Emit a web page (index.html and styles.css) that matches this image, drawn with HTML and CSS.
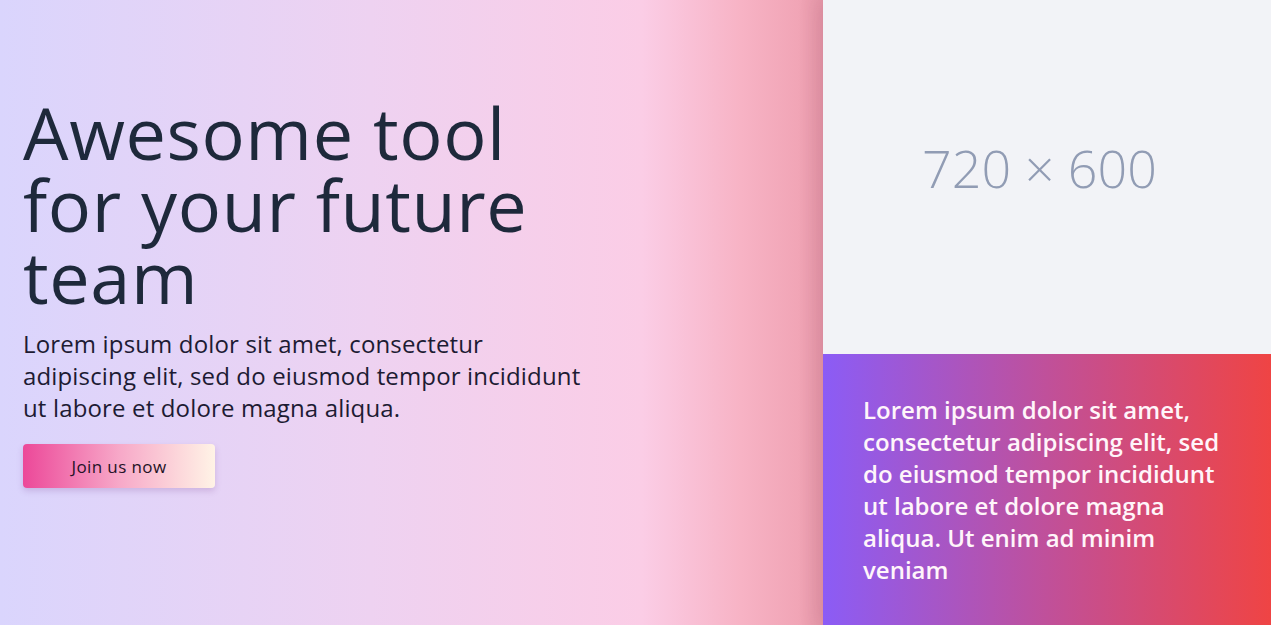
FILE: index.html
```html
<!DOCTYPE html>
<html lang="en">
<head>
<meta charset="utf-8">
<title>Awesome tool</title>
<link rel="stylesheet" href="styles.css">
</head>
<body>
<section class="hero">
  <div class="hero-main">
    <div class="hero-content">
      <h1 class="hero-title">Awesome tool for your future team</h1>
      <p class="hero-text">Lorem ipsum dolor sit amet, consectetur adipiscing elit, sed do eiusmod tempor incididunt ut labore et dolore magna aliqua.</p>
      <button class="hero-btn" type="button">Join us now</button>
    </div>
  </div>
  <aside class="hero-side">
    <div class="placeholder"><span class="placeholder-label">720 × 600</span></div>
    <div class="side-card">
      <p class="side-text">Lorem ipsum dolor sit amet, consectetur adipiscing elit, sed do eiusmod tempor incididunt ut labore et dolore magna aliqua. Ut enim ad minim veniam</p>
    </div>
  </aside>
</section>
</body>
</html>
```
FILE: styles.css
```css
* { box-sizing: border-box; }
html, body { margin: 0; padding: 0; }
body {
  font-family: "Open Sans", "Noto Sans", sans-serif;
  background: #f2f3f7;
}
.hero {
  display: flex;
  min-height: 626px;
}
.hero-main {
  flex: 1;
  background: linear-gradient(to right, #dad5fd 0%, #eed2f1 45%, #fbcde6 78%, #f7b3c5 90%, #f1a5b6 97%, #e597a8 100%);
  padding: 96px 0 0 23px;
}
.hero-content {
  max-width: 565px;
}
.hero-title {
  margin: 0;
  font-size: 72px;
  line-height: 72px;
  font-weight: 500;
  color: #1e293b;
  letter-spacing: 0.6px;
}
.hero-text {
  margin: 16px 0 0;
  font-size: 24px;
  line-height: 32px;
  font-weight: 500;
  color: #1d1b33;
  letter-spacing: 0.15px;
}
.hero-btn {
  margin-top: 20px;
  width: 192px;
  height: 44px;
  border: 0;
  border-radius: 4px;
  background: linear-gradient(to right, #ec4899 0%, #f7a8c8 50%, #fff3e6 100%);
  box-shadow: 0 3px 6px rgba(120, 60, 140, 0.22);
  font-family: inherit;
  font-size: 17px;
  font-weight: 500;
  letter-spacing: 0.4px;
  color: #241226;
  cursor: pointer;
}
.hero-side {
  width: 448px;
  display: flex;
  flex-direction: column;
  box-shadow: -6px 0 18px rgba(120, 40, 70, 0.12);
}
.placeholder {
  height: 354px;
  background: #f2f3f7;
  display: flex;
  align-items: center;
  justify-content: center;
  padding: 0 15px 20px 0;
}
.placeholder-label {
  font-family: "Open Sans", sans-serif;
  font-weight: 300;
  font-size: 52px;
  color: #919cb4;
}
.side-card {
  flex: 1;
  background: linear-gradient(to right, #8b5cf6 0%, #c0509a 50%, #ef4444 100%);
  padding: 40px;
}
.side-text {
  margin: 0;
  font-size: 24px;
  line-height: 32px;
  font-weight: 600;
  color: #fff5fa;
}
```
